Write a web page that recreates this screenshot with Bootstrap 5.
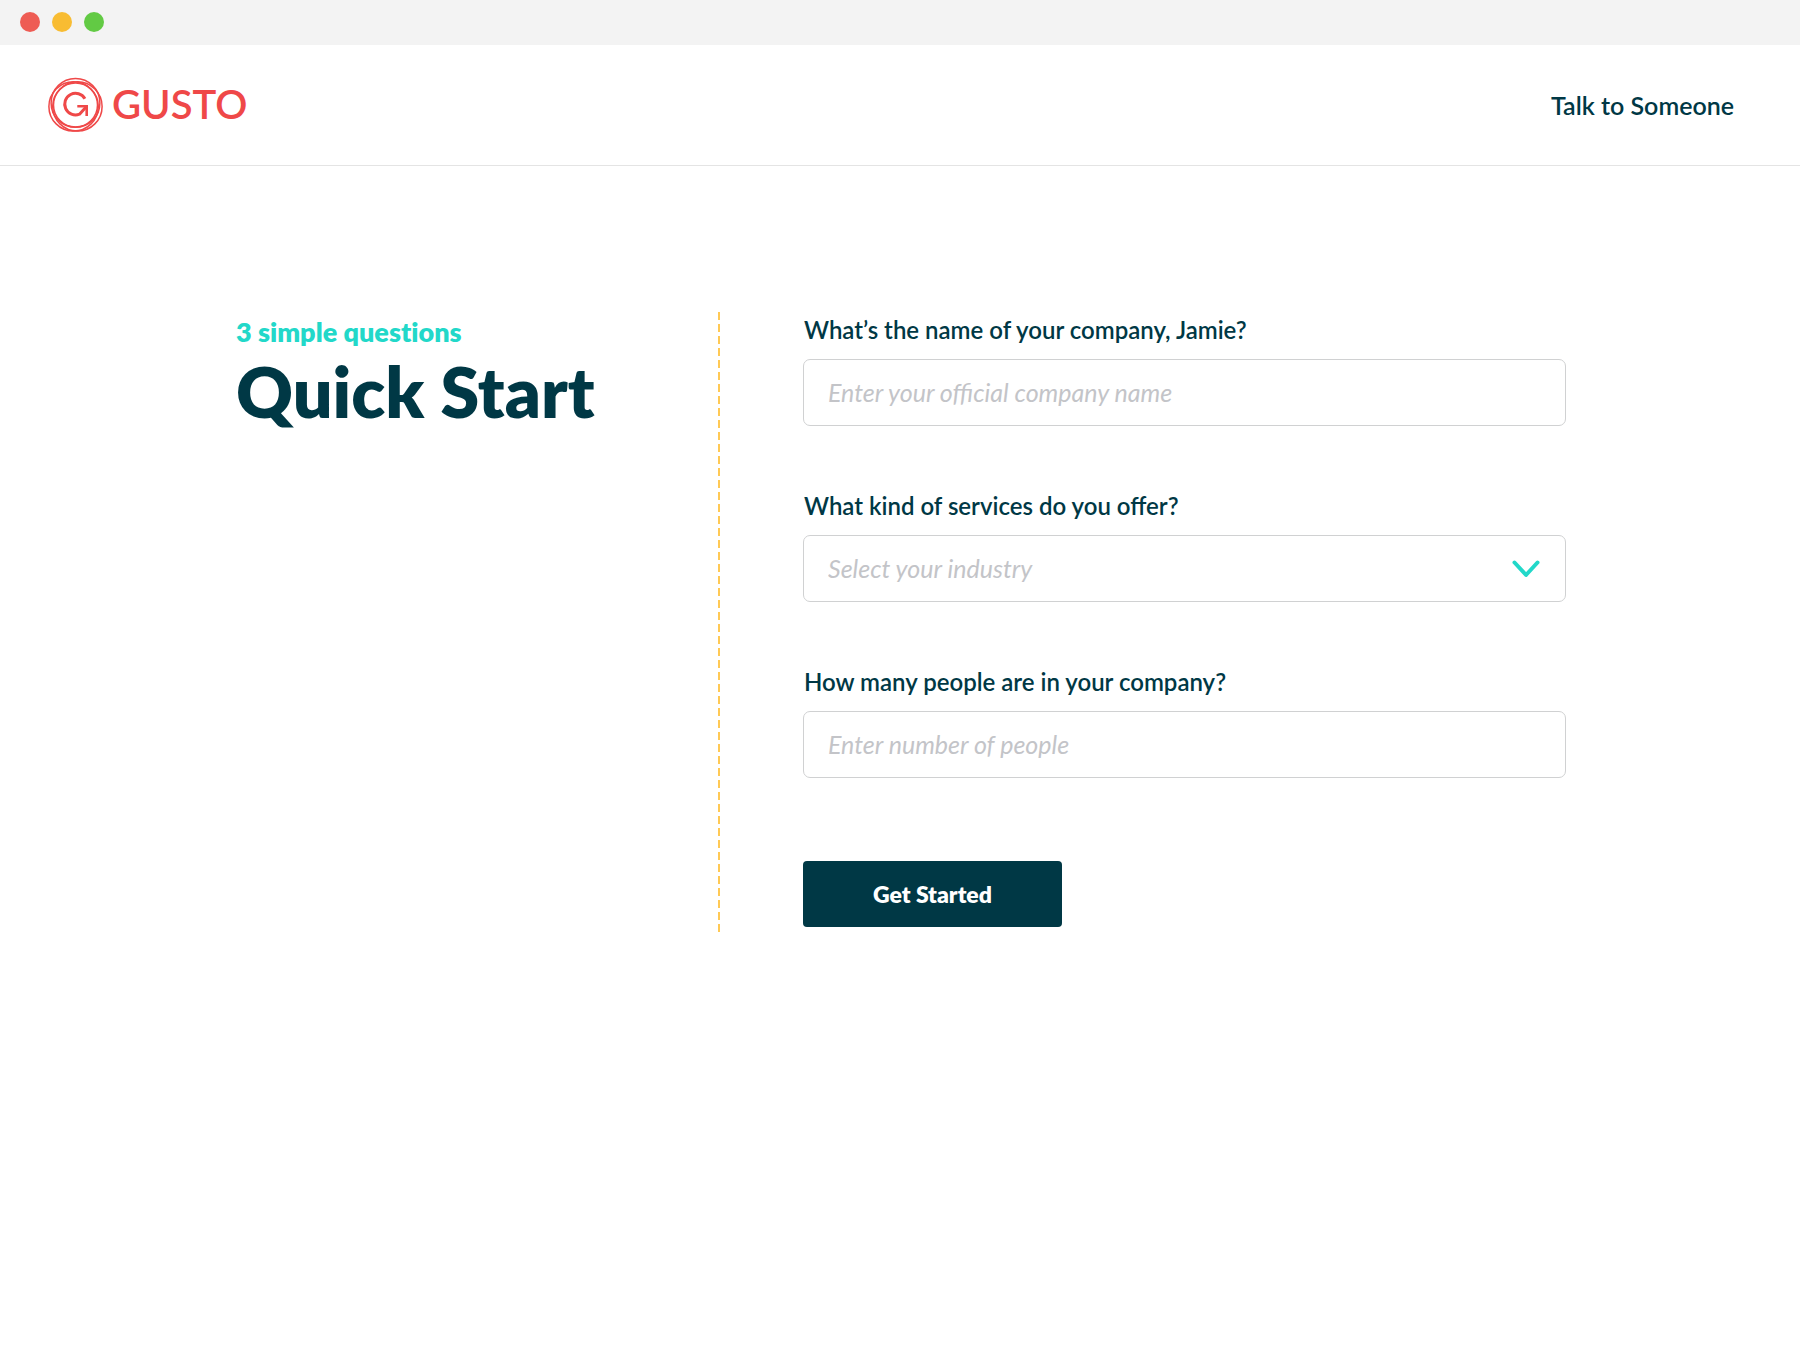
<!DOCTYPE html>
<html lang="en">
<head>
<meta charset="utf-8">
<meta name="viewport" content="width=device-width, initial-scale=1">
<title>Gusto – Quick Start</title>
<link href="https://cdn.jsdelivr.net/npm/bootstrap@5.3.0/dist/css/bootstrap.min.css" rel="stylesheet">
<style>
  :root { --ink: #003845; --teal: #22d8c9; --coral: #ef4848; --line: #d0d1d2; --hint: #c3c4c8; }
  body { font-family: Lato, "Open Sans", sans-serif; color: var(--ink); background: #fff; }
  .window-bar { background: #f3f3f3; height: 45px; padding: 0 20px 2px; gap: 12px; }
  .window-dot { width: 20px; height: 20px; }
  .dot-close { background: #ee5c54; }
  .dot-min { background: #f8bc32; }
  .dot-max { background: #62ca44; }
  .site-header { height: 121px; padding: 0 66px 0 48px; border-bottom: 1px solid #e4e4e4; }
  .wordmark { color: var(--coral); font-size: 40px; line-height: 54px; font-weight: 600; padding-bottom: 2px; }
  .talk-link { color: var(--ink); font-size: 25px; line-height: 30px; font-weight: 600; }
  .quick-start { max-width: 1332px; padding-top: 146px; }
  .intro { flex: 0 1 484px; padding: 4px 0 0 2px; }
  .kicker { color: var(--teal); font-size: 27px; line-height: 32px; font-weight: 800; font-variant-ligatures: none; }
  .headline { font-size: 70px; line-height: 86px; font-weight: 800; }
  .divider { flex: none; width: 2px; background: repeating-linear-gradient(#ffc955 0 8px, #fff 8px 12px); }
  .questions { flex: 1 1 0; padding: 3px 0 5px 83px; }
  .question + .question { margin-top: 65px; }
  .question .form-label { font-size: 24px; line-height: 30px; font-weight: 600; margin-bottom: 14px; padding-left: 1px; }
  .question .form-control, .question .form-select {
    height: 67px; padding: 0 24px 2px; font-size: 25px; line-height: 30px; font-style: italic;
    border: 1px solid var(--line); border-radius: 7px; color: var(--ink);
  }
  .question .form-select { background-image: none; color: var(--hint); }
  .question .form-control::placeholder { color: var(--hint); opacity: 1; }
  .chevron { right: 26px; }
  .start-btn { width: 259px; height: 66px; margin-top: 83px; background: var(--ink); color: #fff;
    font-size: 23px; line-height: 30px; font-weight: 800; border: 0; border-radius: 4px; }
  .start-btn:hover { background: #00505f; color: #fff; }
</style>
</head>
<body>
<div class="window-bar d-flex align-items-center">
  <span class="window-dot dot-close rounded-circle"></span>
  <span class="window-dot dot-min rounded-circle"></span>
  <span class="window-dot dot-max rounded-circle"></span>
</div>
<header class="site-header d-flex align-items-center justify-content-between">
  <a href="#" class="d-flex align-items-center gap-2 text-decoration-none" aria-label="Gusto home">
    <svg width="56" height="56" viewBox="0 0 56 56" fill="none" stroke="#ef4848" aria-hidden="true">
      <g stroke-width="1.5">
        <circle cx="27.5" cy="25.9" r="24.4"/>
        <circle cx="25.6" cy="29.4" r="24.7"/>
        <circle cx="29.4" cy="29.4" r="24.7"/>
        <circle cx="27.5" cy="28" r="22"/>
      </g>
      <path d="M36.9 21.8 A10.8 10.8 0 1 0 31.5 37.2 L38.5 29.4" stroke-width="3" stroke-linejoin="round"/>
      <path d="M29.3 29.2 H38.7 V39" stroke-width="2.6"/>
    </svg>
    <span class="wordmark">GUSTO</span>
  </a>
  <a href="#" class="talk-link text-decoration-none">Talk to Someone</a>
</header>
<main class="quick-start container-fluid px-0 d-flex">
  <section class="intro">
    <p class="kicker mb-0">3 simple questions</p>
    <h1 class="headline mb-0 text-nowrap">Quick Start</h1>
  </section>
  <div class="divider"></div>
  <form class="questions">
    <div class="question">
      <label class="form-label d-block" for="company">What’s the name of your company, Jamie?</label>
      <input class="form-control" type="text" id="company" placeholder="Enter your official company name">
    </div>
    <div class="question">
      <label class="form-label d-block" for="industry">What kind of services do you offer?</label>
      <div class="position-relative d-flex align-items-center">
        <select class="form-select" id="industry">
          <option selected>Select your industry</option>
        </select>
        <svg class="chevron position-absolute pe-none" width="28" height="20" viewBox="0 0 28 20" fill="none" stroke="#22d8c9" stroke-width="4" stroke-linecap="round" stroke-linejoin="round" aria-hidden="true"><path d="M2.5 3.5 L14 16 L25.5 3.5"/></svg>
      </div>
    </div>
    <div class="question">
      <label class="form-label d-block" for="people">How many people are in your company?</label>
      <input class="form-control" type="text" inputmode="numeric" id="people" placeholder="Enter number of people">
    </div>
    <button type="submit" class="btn start-btn">Get Started</button>
  </form>
</main>
<script src="https://cdn.jsdelivr.net/npm/bootstrap@5.3.0/dist/js/bootstrap.bundle.min.js"></script>
</body>
</html>
